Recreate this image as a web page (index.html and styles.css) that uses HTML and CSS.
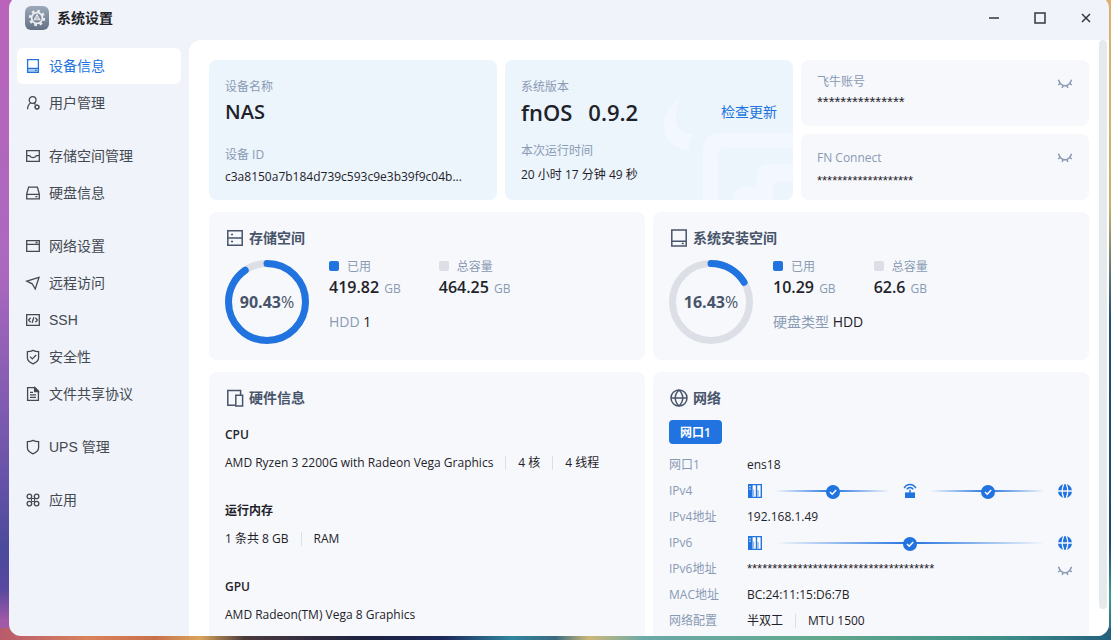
FILE: index.html
```html
<!DOCTYPE html>
<html lang="zh-CN">
<head>
    <meta charset="UTF-8">
    <meta name="viewport" content="width=device-width, initial-scale=1.0">
    <title>系统设置</title>
    <link rel="stylesheet" href="styles.css">
</head>
<body>

<!-- shared icons -->
<svg class="sprite" aria-hidden="true">
    <symbol id="eye" viewBox="0 0 16 16"><path d="M1.4 3.8C3 8 5.2 9.8 8 9.8s5-1.8 6.600-6M3.400 7.400 1.200 9M6 9.600l-.8 2.400M10 9.600l.8 2.400M12.600 7.400 14.800 9" fill="none" stroke="currentColor" stroke-width="1.500"/></symbol>
    <symbol id="nas" viewBox="0 0 16 16"><path fill="currentColor" d="M1 1h14v14H1z"/><path fill="#fff" d="M5.600 2.200h3.200v11.600H5.600zM10.200 2.200h3.400v11.600h-3.400z"/><path fill="#8fb9f0" d="M5.600 6.500h1.600v7.300H5.600zM10.200 7h1.600v6.800h-1.600z"/><path fill="#fff" d="M2.400 3h1.200v1.200H2.400zM2.400 5.600h1.200v1.200H2.400z"/></symbol>
    <symbol id="globe-solid" viewBox="0 0 16 16"><circle cx="8" cy="8" r="7" fill="currentColor"/><path d="M1 8h14M6.800 1Q3.600 8 6.800 15M9.200 1q3.200 7 0 14" fill="none" stroke="#f6f8fc" stroke-width="1.300"/></symbol>
    <symbol id="router" viewBox="0 0 16 16"><path d="M3 9.400h10V15H3z" fill="currentColor"/><path d="M8 6.800v3M2.200 5.200C4.800.4 11.200.4 13.800 5.200M4.800 6.400c1.600-2.600 4.800-2.600 6.400 0" fill="none" stroke="currentColor" stroke-width="1.500"/></symbol>
    <symbol id="check" viewBox="0 0 14 14"><circle cx="7" cy="7" r="7" fill="#2173df"/><path d="m4 7 2.200 2.200L10.200 5" fill="none" stroke="#fff" stroke-width="1.500"/></symbol>
</svg>

<div class="window">
    <header class="titlebar">
        <svg class="app-icon" viewBox="0 0 24 24">
            <defs><linearGradient id="g1" x2="0" y2="1"><stop stop-color="#9ba9ba"/><stop offset="1" stop-color="#637083"/></linearGradient></defs>
            <rect width="24" height="24" rx="6" fill="url(#g1)"/>
            <circle cx="12" cy="12" r="6.900" fill="none" stroke="#e9ebee" stroke-width="2.600" stroke-dasharray="2.700 2.720"/>
            <circle cx="12" cy="12" r="5.400" fill="none" stroke="#e9ebee" stroke-width="1.800"/>
            <path d="m12 8.600 3 5.200H9zM12 8.600v3.200M9 13.800l3-2 3 2" fill="none" stroke="#e9ebee" stroke-width="1"/>
        </svg>
        <h1>系统设置</h1>
        <div class="win-buttons">
            <button type="button" aria-label="最小化"><svg viewBox="0 0 12 12"><path d="M1 6h10"/></svg></button>
            <button type="button" aria-label="最大化"><svg viewBox="0 0 12 12"><path d="M1 1h10v10H1z"/></svg></button>
            <button type="button" aria-label="关闭"><svg viewBox="0 0 12 12"><path d="m2 2 8 8m0-8-8 8"/></svg></button>
        </div>
    </header>

    <div class="body">
        <nav class="sidebar">
            <div class="group">
                <a href="#" class="active"><svg viewBox="0 0 16 16"><path d="M3 10.400h10V14H3z" fill="#a9cbf5" stroke="none"/><path d="M2.600 1.700h10.800v12.600H2.600zM2.600 10.400h10.800M10 12.400h1.600"/></svg>设备信息</a>
                <a href="#"><svg viewBox="0 0 16 16"><circle cx="7.600" cy="5" r="3.400"/><path d="M5.800 8C3.600 9 2.700 11 2.500 14.300M9 8.400l1.600 1"/><circle cx="12" cy="12" r="1.900"/><path d="M12 9.400v1M12 13.800v1M9.700 10.800l.8.4M13.600 12.800l.8.4M9.700 13.200l.8-.4M13.600 11.200l.8-.4"/></svg>用户管理</a>
            </div>
            <div class="group">
                <a href="#"><svg viewBox="0 0 16 16"><path d="M1.700 2.600h12.600v10.800H1.700zM1.700 7.600h2.800c1 2.600 6 2.600 7 0h2.800"/></svg>存储空间管理</a>
                <a href="#"><svg viewBox="0 0 16 16"><path d="M3.600 2.200h8.800l1.900 7v4.600H1.700V9.200zM1.700 9.400h12.600M10.400 11.700h2"/></svg>硬盘信息</a>
            </div>
            <div class="group">
                <a href="#"><svg viewBox="0 0 16 16"><path d="M1.700 2.700h12.600v10.600H1.700zM1.700 6.400h12.600M10.600 4.500h2"/></svg>网络设置</a>
                <a href="#"><svg viewBox="0 0 16 16"><path d="M14 2.400 1.800 6.200l5.400 2.600 3 5.200z"/></svg>远程访问</a>
                <a href="#"><svg viewBox="0 0 16 16"><path d="M1.700 2.700h12.600v10.600H1.700zM5.600 5.800 3.600 8l2 2.200M10.400 5.800l2 2.200-2 2.200M8.800 5.200l-1.600 5.600"/></svg>SSH</a>
                <a href="#"><svg viewBox="0 0 16 16"><path d="M8 1.400c1.600.9 3.400 1.300 5.600 1.300v6c0 3-2.400 4.800-5.600 6.100-3.200-1.300-5.600-3.100-5.600-6.100v-6C4.600 2.700 6.400 2.300 8 1.400zM5 7.600l2.300 2.300 3.900-3.900"/></svg>安全性</a>
                <a href="#"><svg viewBox="0 0 16 16"><path d="M2.600 1.700H10l3.400 3.400v9.200H2.600zM5 6.400h3M5 8.800h6M5 11.400h6"/><path d="M9.600 1.700v3.900h3.800z" fill="currentColor"/></svg>文件共享协议</a>
            </div>
            <div class="group">
                <a href="#"><svg viewBox="0 0 16 16"><path d="M8 1.400c1.600.9 3.400 1.300 5.600 1.300v6c0 3-2.400 4.800-5.600 6.100-3.200-1.300-5.600-3.100-5.600-6.100v-6C4.600 2.700 6.400 2.300 8 1.400z"/></svg>UPS 管理</a>
            </div>
            <div class="group">
                <a href="#"><svg viewBox="0 0 16 16"><path d="M6.500 6.500h3v3h-3z" stroke-width="1"/><circle cx="4.400" cy="4.400" r="2.300"/><circle cx="11.600" cy="4.400" r="2.300"/><circle cx="4.400" cy="11.600" r="2.300"/><circle cx="11.600" cy="11.600" r="2.300"/></svg>应用</a>
            </div>
        </nav>

        <main class="content">
            <div class="top-row">
                <section class="card blue">
                    <p class="label">设备名称</p>
                    <p class="name">NAS</p>
                    <p class="label second">设备 ID</p>
                    <p class="value">c3a8150a7b184d739c593c9e3b39f9c04b...</p>
                </section>
                <section class="card blue version">
                    <svg class="mark" viewBox="0 0 136 104">
                        <path d="M23 3C10 11 4 23 8 37c3 10 12 17 24 17 0-7 2-12 6-17-8 2-14 0-17-6-4-8-2-18 2-28z"/>
                        <path d="M46 104V55q0-18 18-18h72v15H70q-9 0-9 9v43z"/>
                        <path d="M76 104v-2q0-11 11-11h13V79q0-11 11-11h25v17h-12q-8 0-8 8v11z"/>
                    </svg>
                    <p class="label">系统版本</p>
                    <div class="os">
                        <span>fnOS</span>
                        <span>0.9.2</span>
                        <a href="#">检查更新</a>
                    </div>
                    <p class="label second">本次运行时间</p>
                    <p class="value">20 小时 17 分钟 49 秒</p>
                </section>
                <div class="accounts">
                    <section class="card account">
                        <div>
                            <p class="label">飞牛账号</p>
                            <p class="stars large">***************</p>
                        </div>
                        <button type="button" class="eye" aria-label="显示飞牛账号"><svg><use href="#eye"/></svg></button>
                    </section>
                    <section class="card account connect">
                        <div>
                            <p class="label">FN Connect</p>
                            <p class="stars">*******************</p>
                        </div>
                        <button type="button" class="eye" aria-label="显示 FN Connect"><svg><use href="#eye"/></svg></button>
                    </section>
                </div>
            </div>

            <div class="half-row">
                <section class="card">
                    <h2><svg viewBox="0 0 20 20"><path d="M2.800 2.800h14.400v14.400H2.800zM2.800 10h14.400M6 6.400h2M6 13.600h2"/></svg>存储空间</h2>
                    <div class="usage">
                        <div class="ring">
                            <svg viewBox="0 0 84 84"><circle cx="42" cy="42" r="38.500"/><circle class="used" cx="42" cy="42" r="38.500" pathLength="100" stroke-dasharray="90.430 100"/></svg>
                            <p><b>90.43</b>%</p>
                        </div>
                        <div class="detail">
                            <div class="figures">
                                <div><p class="key used">已用</p><p class="amount">419.82 <small>GB</small></p></div>
                                <div><p class="key">总容量</p><p class="amount">464.25 <small>GB</small></p></div>
                            </div>
                            <p class="disk">HDD <b>1</b></p>
                        </div>
                    </div>
                </section>
                <section class="card">
                    <h2><svg viewBox="0 0 20 20"><path d="M2.800 2h14.400v16H2.800zM2.800 13.200h14.400M12.800 15.600h2"/></svg>系统安装空间</h2>
                    <div class="usage">
                        <div class="ring">
                            <svg viewBox="0 0 84 84"><circle cx="42" cy="42" r="38.500"/><circle class="used" cx="42" cy="42" r="38.500" pathLength="100" stroke-dasharray="16.430 100"/></svg>
                            <p><b>16.43</b>%</p>
                        </div>
                        <div class="detail">
                            <div class="figures">
                                <div><p class="key used">已用</p><p class="amount">10.29 <small>GB</small></p></div>
                                <div><p class="key">总容量</p><p class="amount">62.6 <small>GB</small></p></div>
                            </div>
                            <p class="disk">硬盘类型 <b>HDD</b></p>
                        </div>
                    </div>
                </section>
            </div>

            <div class="half-row">
                <section class="card">
                    <h2><svg viewBox="0 0 20 20"><path d="M10 17.200H2.800V2.400h12.800v4.400M10.800 7.200h6.800v10.800h-6.800z"/></svg>硬件信息</h2>
                    <div class="hardware">
                        <div>
                            <h3>CPU</h3>
                            <p class="parts"><span>AMD Ryzen 3 2200G with Radeon Vega Graphics</span><span>4 核</span><span>4 线程</span></p>
                        </div>
                        <div>
                            <h3>运行内存</h3>
                            <p class="parts"><span>1 条共 8 GB</span><span>RAM</span></p>
                        </div>
                        <div>
                            <h3>GPU</h3>
                            <p class="parts"><span>AMD Radeon(TM) Vega 8 Graphics</span></p>
                        </div>
                    </div>
                </section>
                <section class="card">
                    <h2><svg viewBox="0 0 20 20"><circle cx="10" cy="10" r="8"/><path d="M2 10h16M10 2c-5 4.800-5 11.200 0 16M10 2c5 4.800 5 11.200 0 16"/></svg>网络</h2>
                    <button type="button" class="tab">网口1</button>
                    <dl class="network">
                        <dt>网口1</dt>
                        <dd>ens18</dd>
                        <dt>IPv4</dt>
                        <dd class="path">
                            <svg><use href="#nas"/></svg>
                            <span class="link"><svg><use href="#check"/></svg></span>
                            <svg><use href="#router"/></svg>
                            <span class="link"><svg><use href="#check"/></svg></span>
                            <svg><use href="#globe-solid"/></svg>
                        </dd>
                        <dt>IPv4地址</dt>
                        <dd>192.168.1.49</dd>
                        <dt>IPv6</dt>
                        <dd class="path">
                            <svg><use href="#nas"/></svg>
                            <span class="link"><svg><use href="#check"/></svg></span>
                            <svg><use href="#globe-solid"/></svg>
                        </dd>
                        <dt>IPv6地址</dt>
                        <dd class="hidden-value"><span class="stars">*************************************</span><button type="button" class="eye" aria-label="显示 IPv6地址"><svg><use href="#eye"/></svg></button></dd>
                        <dt>MAC地址</dt>
                        <dd>BC:24:11:15:D6:7B</dd>
                        <dt>网络配置</dt>
                        <dd class="parts"><span>半双工</span><span>MTU 1500</span></dd>
                    </dl>
                </section>
            </div>
            <div class="scrollbar"></div>
        </main>
    </div>
</div>

</body>
</html>
```
FILE: styles.css
```css
* {
    box-sizing: border-box;
}
body {
    margin: 0;
    height: 100vh;
    overflow: hidden;
    font-family: "Open Sans", "Noto Sans CJK SC", sans-serif;
    font-size: 12px;
    line-height: 20px;
    color: #1f2329;
    background:
        linear-gradient(90deg, #b85a6c 0, #d9825c 8%, #c8704c 14%, #d9a55c 18%, #4a3a3c 22%, #1c2140 33%, #1d2a5c 40%, #2f86a0 46%, #3b6a80 50%, #cdb878 53%, #6aa9a8 58%, #62a88c 74%, #3f8f88 90%, #24607e 100%) bottom / 100% 12px no-repeat,
        linear-gradient(#e0ae6a 0, #c9b36c 32%, #1f4f7a 50%, #1c4a74 85%, #3a9f98 93%, #24607e 100%) right / 20px 100% no-repeat,
        linear-gradient(#b964ba 0, #ac68c0 42%, #7658ae 68%, #4b4a9c 86%, #5747a0 92%, #a05aa8 97%);
}
p, h1, h2, h3, dl, dd {
    margin: 0;
}
button {
    padding: 0;
    border: 0;
    background: none;
    font-family: inherit;
    cursor: pointer;
}
a {
    text-decoration: none;
}
.sprite {
    display: none;
}

.window {
    height: 100vh;
    margin: -4px 2px 0 9px;
    display: flex;
    flex-direction: column;
    border-radius: 12px;
    overflow: hidden;
    background: #f0f3f9;
}
.titlebar {
    height: 44px;
    flex: none;
    display: flex;
    align-items: center;
    gap: 8px;
    padding-left: 16px;
}
.titlebar h1 {
    font-size: 14px;
}
.app-icon {
    width: 24px;
    height: 24px;
}
.win-buttons {
    margin-left: auto;
    display: flex;
}
.win-buttons button {
    width: 46px;
    height: 36px;
    display: flex;
    align-items: center;
    justify-content: center;
}
.win-buttons svg {
    width: 12px;
    height: 12px;
    fill: none;
    stroke: #33373d;
    stroke-width: 1.5;
}

.body {
    flex: 1;
    min-height: 0;
    display: flex;
}
.sidebar {
    width: 180px;
    flex: none;
    padding: 8px;
    display: flex;
    flex-direction: column;
    gap: 17px;
    font-family: "Liberation Sans", "Noto Sans CJK SC", sans-serif;
}
.group {
    display: flex;
    flex-direction: column;
    gap: 1px;
}
.group a {
    height: 36px;
    display: flex;
    align-items: center;
    gap: 8px;
    padding: 0 8px;
    border-radius: 6px;
    font-size: 14px;
    color: #434951;
}
.group a.active {
    background: #fff;
    color: #2173df;
}
.group svg {
    width: 16px;
    height: 16px;
    fill: none;
    stroke: currentColor;
    stroke-width: 1.3;
}

.content {
    position: relative;
    flex: 1;
    min-width: 0;
    padding: 20px;
    display: flex;
    flex-direction: column;
    gap: 12px;
    overflow: hidden;
    background: #fff;
    border-top-left-radius: 12px;
}
.scrollbar {
    position: absolute;
    top: 0;
    right: 2px;
    bottom: 27px;
    width: 8px;
    border-radius: 4px;
    background: #e6eaed;
}
.top-row, .half-row {
    flex: none;
    display: grid;
    gap: 8px;
    grid-template-columns: repeat(3, 1fr);
}
.half-row {
    grid-template-columns: repeat(2, 1fr);
}
.card {
    padding: 16px;
    border-radius: 8px;
    background: #f6f8fc;
}
.card.blue {
    height: 140px;
    padding-top: 17px;
    background: #ecf4fc;
}
.label {
    color: #8a9ab3;
}
.name {
    font-size: 20px;
    line-height: 30px;
    font-weight: 600;
}
.label.second {
    margin-top: 18px;
}
.value {
    line-height: 24px;
}
.version {
    position: relative;
    overflow: hidden;
}
.version .label.second {
    margin: 14px 0 2px;
}
.mark {
    position: absolute;
    right: 0;
    bottom: 0;
    width: 136px;
    height: 104px;
    fill: #f3f7ff;
}
.os {
    position: relative;
    display: flex;
    align-items: center;
    gap: 16px;
    line-height: 30px;
    font-size: 22px;
    font-weight: 600;
}
.os a {
    margin-left: auto;
    font-size: 14px;
    font-weight: 400;
    color: #2173df;
}
.accounts {
    display: grid;
    grid-auto-rows: 1fr;
    gap: 8px;
}
.account {
    padding: 12px 16px 0;
    display: flex;
    justify-content: space-between;
}
.stars {
    font-family: "Liberation Sans", sans-serif;
    font-size: 13px;
}
.stars.large {
    font-size: 15px;
}
.connect .label {
    margin-top: 2px;
}
.connect .stars {
    line-height: 26px;
}
.eye {
    width: 16px;
    height: 20px;
    color: #8a9ab3;
}
.eye svg {
    display: block;
    width: 16px;
    height: 16px;
    margin-top: 4px;
}

h2 {
    display: flex;
    align-items: center;
    gap: 4px;
    font-size: 14px;
    font-weight: 600;
    color: #48546a;
}
h2 svg {
    width: 20px;
    height: 20px;
    fill: none;
    stroke: currentColor;
    stroke-width: 1.5;
}
.usage {
    margin-top: 12px;
    display: flex;
    gap: 20px;
}
.ring {
    width: 84px;
    height: 84px;
    display: grid;
    place-items: center;
    font-size: 16px;
    color: #48546a;
}
.ring svg, .ring p {
    grid-area: 1 / 1;
}
.ring svg {
    width: 84px;
    height: 84px;
    fill: none;
    stroke: #dcdfe6;
    stroke-width: 7;
    transform: rotate(-90deg);
}
.ring .used {
    stroke: #2173df;
    stroke-linecap: round;
}
.figures {
    display: flex;
    gap: 38px;
}
.key {
    line-height: 14px;
    color: #8a9ab3;
}
.key::before {
    content: "";
    display: inline-block;
    width: 10px;
    height: 10px;
    margin-right: 8px;
    border-radius: 2px;
    background: #dcdfe6;
}
.key.used::before {
    background: #2173df;
}
.amount {
    font-size: 16px;
    font-weight: 600;
    line-height: 26px;
}
.amount small {
    margin-left: 1px;
    font-size: 12px;
    font-weight: 400;
    color: #8a9ab3;
}
.disk {
    margin-top: 10px;
    font-size: 14px;
    color: #8a9ab3;
}
.disk b {
    font-weight: 500;
    color: #1f2329;
}

.hardware {
    margin-top: 17px;
    display: grid;
    gap: 28px;
}
h3 {
    margin-bottom: 8px;
    font-size: 12px;
    font-weight: 600;
}
.parts {
    display: flex;
    align-items: center;
}
.parts span + span {
    margin-left: 12px;
    padding-left: 12px;
    line-height: 14px;
    border-left: 1px solid #dcdfe6;
}
.tab {
    height: 24px;
    margin: 12px 0 11px;
    padding: 0 11px;
    border-radius: 4px;
    background: #2173df;
    color: #fff;
    font-size: 12px;
    font-weight: 600;
}
.network {
    display: grid;
    grid-template-columns: 78px 1fr;
    grid-auto-rows: 20px;
    row-gap: 6px;
}
.network dt {
    color: #8a9ab3;
}
.path {
    display: flex;
    align-items: center;
    gap: 12px;
    color: #2173df;
}
.path > svg {
    flex: none;
    width: 16px;
    height: 16px;
}
.link {
    position: relative;
    flex: 1;
    height: 2px;
    background: linear-gradient(90deg, transparent, #2173df 50%, transparent);
}
.link svg {
    position: absolute;
    top: -5px;
    left: calc(50% - 7px);
    width: 14px;
    height: 14px;
}
.hidden-value {
    display: flex;
    justify-content: space-between;
}
```
